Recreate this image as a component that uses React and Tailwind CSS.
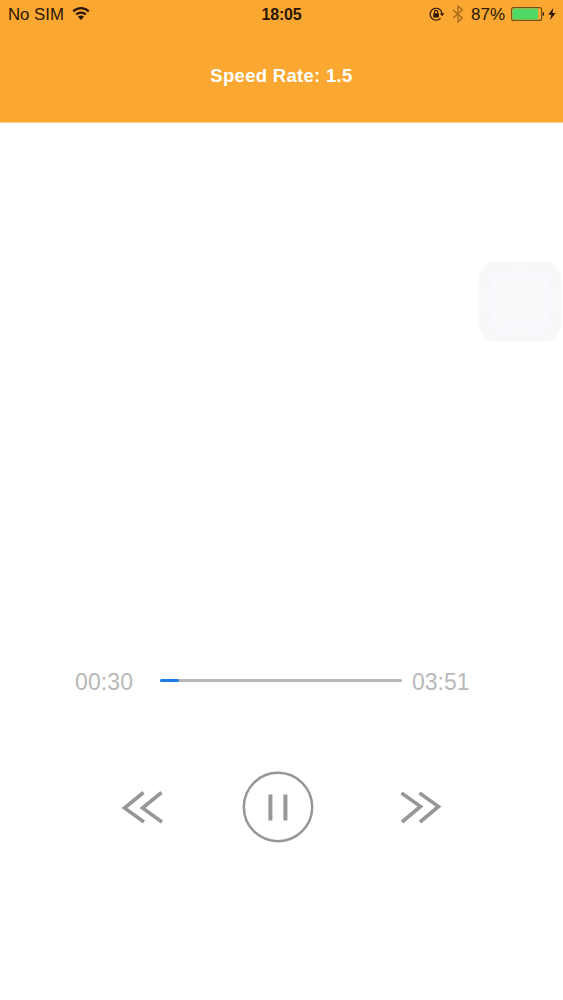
import React, { useState } from 'react';

const DURATION = 231;

const formatTime = (sec) =>
  `${String(Math.floor(sec / 60)).padStart(2, '0')}:${String(sec % 60).padStart(2, '0')}`;

const WifiIcon = () => (
  <svg width="18" height="13" viewBox="0 0 18 13" fill="none" stroke="#2a1703" strokeWidth="2.2">
    <path d="M1.2 4.4C5.6 0.1 12.4 0.1 16.8 4.4" />
    <path d="M4.1 7.5C6.9 4.9 11.1 4.9 13.9 7.5" />
    <path d="M9 13L6 9.8C7.8 8.2 10.2 8.2 12 9.8Z" fill="#2a1703" stroke="none" />
  </svg>
);

// Rotation lock
const LockIcon = () => (
  <svg width="16" height="14" viewBox="0 0 16 14" fill="none" stroke="#2a1703">
    <path d="M11.6 11.3A6 6 0 1 1 13.1 6.4" strokeWidth="1.2" />
    <path d="M10.9 6.3H15.3L13.1 9.2Z" fill="#2a1703" stroke="none" />
    <rect x="4.3" y="6.2" width="5.6" height="4.2" rx="0.5" fill="#2a1703" stroke="none" />
    <path d="M5.5 6.4V5a1.6 1.6 0 0 1 3.2 0v1.4" strokeWidth="1.1" />
  </svg>
);

const BluetoothIcon = () => (
  <svg width="12" height="18" viewBox="0 0 12 18" fill="none" stroke="#a5691c" strokeWidth="1.3">
    <path d="M1 5L10.3 13L6 17V1L10.3 5L1 13" />
  </svg>
);

const BatteryIcon = () => (
  <svg width="34" height="14" viewBox="0 0 34 14" fill="none">
    <rect x="0.6" y="0.6" width="30" height="12.8" rx="2" stroke="#72501a" strokeWidth="1.1" />
    <rect x="1.5" y="1.5" width="25.5" height="11" rx="1" fill="#4fd964" />
    <path d="M31.6 4.7C33.5 5.3 33.5 8.7 31.6 9.3Z" fill="#2a1703" />
  </svg>
);

const BoltIcon = () => (
  <svg width="8" height="12" viewBox="0 0 8 12" fill="#2a1703">
    <path d="M5.3 0L0.3 6.7H3.4L2.1 12L7.7 4.9H4.5Z" />
  </svg>
);

const StatusBar = () => (
  <div className="grid h-[29px] grid-cols-3 items-center text-[17px] leading-[29px] text-[#2a1703]">
    <div className="flex items-center gap-2 pl-2">
      <span className="text-[16.8px]">No SIM</span>
      <span className="-mt-0.5">
        <WifiIcon />
      </span>
    </div>
    <div className="text-center text-[16px] font-bold tracking-[-0.2px]">18:05</div>
    <div className="-mt-px flex items-center justify-end pr-[7px]">
      <LockIcon />
      <span className="ml-[7px]">
        <BluetoothIcon />
      </span>
      <span className="ml-[7px] w-[36px] whitespace-nowrap">87%</span>
      <span className="ml-1">
        <BatteryIcon />
      </span>
      <span className="ml-[3px]">
        <BoltIcon />
      </span>
    </div>
  </div>
);

const App = () => {
  const [current, setCurrent] = useState(30);
  const [playing, setPlaying] = useState(true);

  const skip = (sec) => setCurrent((prev) => Math.min(DURATION, Math.max(0, prev + sec)));

  const progress = Math.max(0, ((current - 12) / DURATION) * 100);

  return (
    <div className="relative flex h-screen flex-col bg-white font-['Liberation_Sans',Arial,sans-serif]">
      <header className="h-[123px] shrink-0 border-b border-[#fbd08e] bg-[#faa832]">
        <StatusBar />
        <h1 className="mt-[33px] text-center text-[18.5px] font-bold leading-[28px] tracking-[0.3px] text-white">
          Speed Rate: 1.5
        </h1>
      </header>

      {/* AssistiveTouch button */}
      <div className="absolute left-[479px] top-[261px] h-[81px] w-[82px] rounded-[18px] bg-[#f8f7fa] p-3">
        <div className="h-full w-full rounded-xl bg-[#faf9fc] blur-[3px]" />
      </div>

      <main className="mt-auto h-[334px]">
        <div className="flex h-8 items-center pl-[75px] text-[23px] text-[#b9b8ba]">
          <span className="w-[85px] tracking-[0.1px]">{formatTime(current)}</span>
          <div className="-mt-[3px] h-[3px] w-[242px] rounded-full bg-[#b7b6b8]">
            <div className="h-full rounded-full bg-[#1c7de6]" style={{ width: `${progress}%` }} />
          </div>
          <span className="ml-[10px]">{formatTime(DURATION)}</span>
        </div>

        <div className="mt-[73px] flex items-center pl-[121px]">
          <button type="button" aria-label="Rewind" onClick={() => skip(-10)}>
            <svg width="43" height="34" viewBox="0 0 43 34" fill="none" stroke="#979797" strokeWidth="3.6">
              <path d="M22.5 2.5L3.5 18L23 32" />
              <path d="M40.5 2.5L21.5 18L41 32" />
            </svg>
          </button>
          <button type="button" aria-label="Play or pause" className="ml-[78px]" onClick={() => setPlaying(!playing)}>
            <svg width="72" height="72" viewBox="0 0 72 72" fill="none" stroke="#979797">
              <circle cx="36" cy="36" r="34.2" strokeWidth="2.5" />
              {playing ? (
                <path d="M28.4 23.5V49.5M43.4 23.5V49.5" strokeWidth="4" />
              ) : (
                <path d="M29 23L49 36L29 49Z" strokeWidth="3" />
              )}
            </svg>
          </button>
          <button type="button" aria-label="Forward" className="ml-[85px]" onClick={() => skip(10)}>
            <svg width="43" height="34" viewBox="0 0 43 34" fill="none" stroke="#979797" strokeWidth="3.6">
              <path d="M2.5 3L21.5 16.5L3 32" />
              <path d="M20.5 3L39.5 16.5L21 32" />
            </svg>
          </button>
        </div>
      </main>
    </div>
  );
};

export default App;
